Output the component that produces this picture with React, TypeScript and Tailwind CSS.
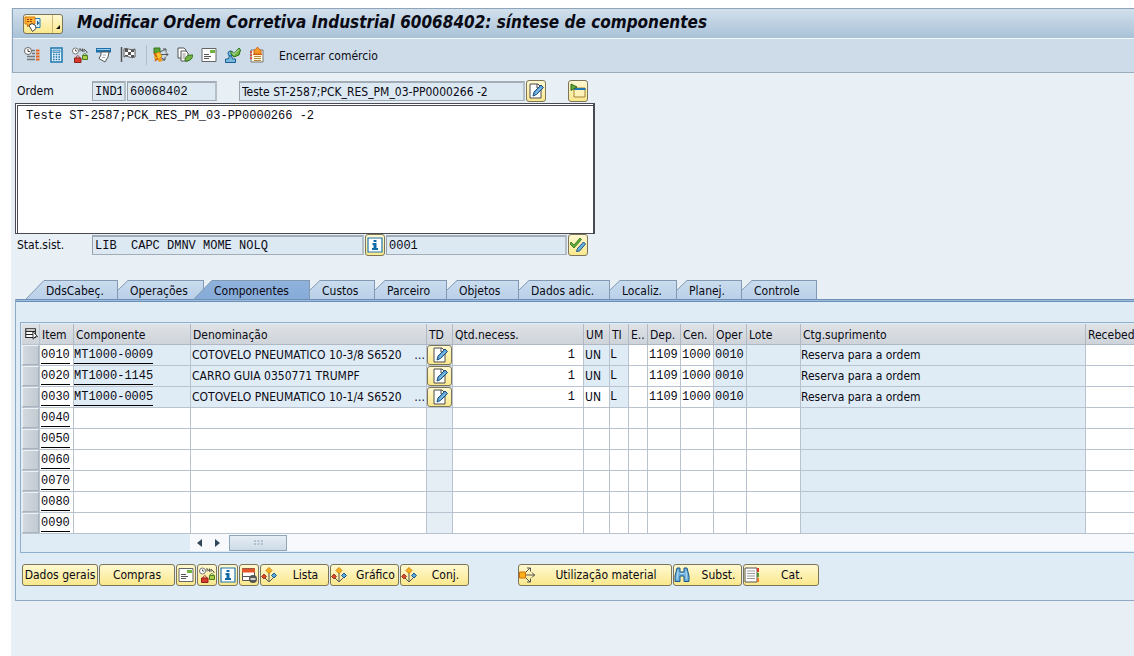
import React from "react";

const svgProps = {
  width: 16,
  height: 16,
  viewBox: "0 0 16 16",
  fill: "none",
  "aria-hidden": true,
} as const;

const MessageIcon = () => (
  <svg width="18" height="16" viewBox="0 0 18 16" fill="none" aria-hidden>
    <path d="M10 2.500h6v9h-6z" fill="#dff0fb" stroke="#1f7fb5" />
    <path d="M13 4.500l2.500 2.500L13 9.500z" fill="#1b5f8f" />
    <path d="M1 1h10v7H6l-2.500 3V8H1z" fill="#fbb034" stroke="#d97b0c" />
    <path d="M3 3.500h6M3 5.500h6" stroke="#a33c00" strokeDasharray="2 1" />
    <path d="M5 9.500l3-2 3.500 2 .5 3-3.500 3z" fill="#fff" stroke="#444" />
  </svg>
);

const ScheduleIcon = () => (
  <svg {...svgProps}>
    <circle cx="4" cy="4" r="3.500" fill="#fff" stroke="#666" />
    <path d="M4 2v2.500h2" stroke="#444" />
    <path d="M8 3.500h3M8 6.500h3M3 9.500h8M3 12.500h8" stroke="#777" strokeWidth="1.500" />
    <path d="M12 3.500h3.500M12 6.500h3.500M12 9.500h3.500M12 12.500h3.500" stroke="#e8651a" strokeWidth="2" />
  </svg>
);

const CalculatorIcon = () => (
  <svg {...svgProps}>
    <path d="M3 1h11v14H3z" fill="#e6f3fb" stroke="#1c75ad" strokeWidth="1.500" />
    <path d="M5 3h7v2.500H5z" fill="#9fc9e6" stroke="#1c75ad" strokeWidth=".7" />
    <path d="M5 7.500h7M5 10h7M5 12.500h7" stroke="#1c75ad" strokeWidth="1.500" strokeDasharray="1.600 1.100" />
  </svg>
);

const NetworkIcon = () => (
  <svg {...svgProps}>
    <circle cx="3.500" cy="4" r="3" fill="#fff" stroke="#777" />
    <path d="M3.500 2.500V4H5" stroke="#555" />
    <path d="M8 4.500V1.500L10.500 4.500V1.500M12 5V2l3 3V6" stroke="#555" />
    <path d="M4 11c0-3 3.500-3 3.500 0" stroke="#a33" />
    <path d="M2.500 11h6.500v4.500H2.500z" fill="#d8392b" stroke="#8d2119" />
    <path d="M11 8.500c0-2.500 3.500-2.500 3.500 0" stroke="#4c7d22" />
    <path d="M10.500 8.500h5v4h-5z" fill="#a8cf45" stroke="#4c7d22" />
  </svg>
);

const PrintIcon = () => (
  <svg {...svgProps}>
    <path d="M0 1h15v4.500H0z" fill="#1b6ea8" />
    <path d="M1 2.500h13" stroke="#9ccdea" />
    <path d="M5 5h8l-1 5-3 5-6-3.500L5 8z" fill="#fff" stroke="#555" />
    <path d="M7 8h3M6 10.500h3" stroke="#9ab" />
  </svg>
);

const FlagIcon = () => (
  <svg {...svgProps}>
    <path d="M1.500 0v15" stroke="#555" strokeWidth="1.500" />
    <path d="M4 2c3-2 5 2 11 0v8c-5 2-7-2-11 0z" fill="#fff" stroke="#555" />
    <path d="M5 2h3v3H5zM11 3h3v2h-3zM8 5h3v3H8zM5 8h3v1H5zM11 8h3v2h-3z" fill="#555" />
  </svg>
);

const DistributeIcon = () => (
  <svg {...svgProps}>
    <path d="M1 1h6v5H1z" fill="#59a63b" stroke="#36751d" />
    <path d="M7 5l6-3M8 7.500h7M7 10l5 3M10 2h3v3M13 5.500l2 2-2 2M12 10v3H9" stroke="#555" />
    <path d="M2 7l4-2 3 4-3 4-4-1z" fill="#ffc52e" stroke="#d88b0a" />
    <path d="M1 6l3 4M2 14l3-3" stroke="#c95b0a" strokeWidth="1.500" />
    <circle cx="7" cy="13" r="2" fill="#f19a18" />
  </svg>
);

const CopyDocIcon = () => (
  <svg {...svgProps}>
    <path d="M1 1h6l2 2v8H1z" fill="#fff" stroke="#555" />
    <path d="M4 4h5l2 2v8H4z" fill="#fff" stroke="#555" />
    <path d="M5.500 7h3M5.500 9h3M5.500 11h3" stroke="#888" />
    <path d="M8 14c0-6 4-6 8-6-1 5-4 6-8 6z" fill="#72b244" stroke="#35731f" />
  </svg>
);

const LetterIcon = () => (
  <svg {...svgProps}>
    <path d="M1 1.500h14v13H1z" fill="#fff" stroke="#666" />
    <path d="M9 3h5v3H9z" fill="#6fb33f" />
    <path d="M3 7.500h5M3 9.500h7M3 11.500h5" stroke="#555" />
  </svg>
);

const StampIcon = () => (
  <svg {...svgProps}>
    <path d="M.5 15.500h10V12H7.500l-1-3.500h-2l-1 3.500h-3z" fill="#79b8df" stroke="#175f93" />
    <circle cx="5.500" cy="6.500" r="2.500" fill="#79b8df" stroke="#175f93" />
    <path d="M6 4l3 2.500L14 1l1.500 2-1.500 5-5 2-3-3z" fill="#6bb33e" stroke="#2f7421" />
    <path d="M7 5.500l2 2L14 2.500" stroke="#d8f0c4" />
  </svg>
);

const AlertDocIcon = () => (
  <svg {...svgProps}>
    <path d="M2 3h12v12H2z" fill="#fff8df" stroke="#777" />
    <path d="M1 5h2M1 8h2M1 11h2" stroke="#d8392b" strokeWidth="1.500" />
    <path d="M5 9.500h7M5 11.500h7M5 13.500h7" stroke="#b28a3a" />
    <path d="M8.500 0l1 1.500 2.500 2V7H5V3.500l2.500-2z" fill="#f69b24" stroke="#d35f12" />
    <path d="M4 7.500h9" stroke="#d35f12" />
  </svg>
);

const EditIcon = () => (
  <svg {...svgProps}>
    <path d="M2 1h8l3 3v11H2z" fill="#fff" stroke="#4c4c4c" />
    <path d="M9 1v4h4" stroke="#4c4c4c" />
    <path d="M5 13l1-4 7-7 2.500 2.500-7 7z" fill="#5ea5d6" stroke="#174f7c" />
    <path d="M7.500 10.500l5.500-5.500" stroke="#8fc4e6" />
  </svg>
);

const PanelIcon = () => (
  <svg {...svgProps}>
    <path d="M4 5h11v9H4z" fill="#fdf3b8" stroke="#a3843a" />
    <path d="M4 6h11.500" stroke="#1f78b4" strokeWidth="2" />
    <path d="M1 1l6 3-6 3.500z" fill="#62a83a" stroke="#2e6d1b" />
  </svg>
);

const InfoIcon = () => (
  <svg {...svgProps}>
    <path d="M1 1h14v14H1z" fill="#fff" stroke="#1c75ad" strokeWidth="1.200" />
    <path d="M6.500 3h3v2h-3zM5.500 6h4v5h1.500v2H5v-2h1.500V8h-1z" fill="#0f6ba6" />
  </svg>
);

const CheckEditIcon = () => (
  <svg {...svgProps}>
    <path d="M1 5l3 3 6-7 1.500 1.500L4 11 0 7z" fill="#5fae35" stroke="#2b6d1d" strokeWidth=".8" />
    <path d="M6.500 14.500l1-3 6-6.500 2 2-6 7z" fill="#6cb2de" stroke="#1b5480" />
  </svg>
);

const TableConfigIcon = () => (
  <svg {...svgProps} width="14" height="14">
    <path d="M2 2h11v10H2zM2 5h11M2 8.500h11" fill="#fff" stroke="#222" strokeWidth="1.200" />
    <path d="M10 5l5.500 6-3 .3L10.500 14z" fill="#fff" stroke="#222" />
  </svg>
);

const DeleteRowIcon = () => (
  <svg {...svgProps}>
    <path d="M1.500 1.500h12v12h-12z" fill="#fff" stroke="#555" />
    <path d="M1 1.500h13v4H1z" fill="#e3562a" />
    <path d="M1.500 9.500h12" stroke="#555" />
    <circle cx="12" cy="12" r="4" fill="#555" />
    <path d="M9.500 12h5" stroke="#fff" strokeWidth="1.500" />
  </svg>
);

const HierarchyIcon = () => (
  <svg {...svgProps}>
    <path d="M8 6v9M3 10l5 5 5-5" stroke="#555" />
    <path d="M8 .5l3 3-3 3-3-3z" fill="#f9b21c" stroke="#cb7c0a" />
    <path d="M3 7l2.500 2.500L3 12 .5 9.500z" fill="#d9482b" stroke="#8d2a19" strokeWidth=".8" />
    <path d="M13 6l2.500 2.500L13 11l-2.500-2.500z" fill="#5aa6d8" stroke="#1b5c8c" />
  </svg>
);

const UsageIcon = () => (
  <svg {...svgProps}>
    <path d="M.5 5h6v6h-6z" fill="#fbb117" stroke="#cf6e0b" />
    <path d="M7 5l4-4M7 8h9M7 11l4 4M8 1h3.500v3.500M13 5.500l2.500 2.500-2.500 2.500M8 15h3.500v-3.500" stroke="#555" />
  </svg>
);

const BinocularsIcon = () => (
  <svg {...svgProps}>
    <path d="M3 1h3v4h4V1h3l2 8v5.500h-5V9H6v5.500H1V9z" fill="#6fb1dc" stroke="#1a5785" />
    <path d="M6 6.500h4M4 4L3 12M12 4l.5 8" stroke="#b6dcf3" />
  </svg>
);

const CatalogIcon = () => (
  <svg {...svgProps}>
    <path d="M1 1h12v14H1z" fill="#fff" stroke="#555" />
    <path d="M3 4h8M3 6.500h8M3 9h8M3 11.500h8" stroke="#999" />
    <path d="M13 1h2v4h-2z" fill="#d8392b" />
    <path d="M13 6h2v4h-2z" fill="#4f9a34" />
    <path d="M13 11h2v4h-2z" fill="#e5762a" />
  </svg>
);

const gold =
  "flex shrink-0 items-center rounded-[3px] border border-[#7d7558] bg-linear-to-b from-[#fff8d0] to-[#fae88c]";
const field =
  "h-5 min-w-0 border border-t-2 border-t-[#a3adb7] border-l-[#97a2ac] border-r-[#b4bfc8] border-b-[#a3adb7] border-r-2 bg-[#dce8f2] px-0.5 outline-none";
const mono = "font-['Liberation_Mono',monospace]";

function IconButton({ label, children }: { label: string; children: React.ReactNode }) {
  return (
    <button aria-label={label} className={`${gold} h-[22px] w-5 justify-center overflow-hidden`}>
      {children}
    </button>
  );
}

const tools: [string, () => React.JSX.Element][] = [
  ["Programação", ScheduleIcon],
  ["Calcular custos", CalculatorIcon],
  ["Rede", NetworkIcon],
  ["Imprimir", PrintIcon],
  ["Encerrar", FlagIcon],
];
const tools2: [string, () => React.JSX.Element][] = [
  ["Distribuir", DistributeIcon],
  ["Copiar", CopyDocIcon],
  ["Texto", LetterIcon],
  ["Aprovar", StampIcon],
  ["Aviso", AlertDocIcon],
];

const tabs: { label: string; width: string }[] = [
  { label: "DdsCabeç.", width: "w-[92px]" },
  { label: "Operações", width: "w-[86px]" },
  { label: "Componentes", width: "w-[116px]" },
  { label: "Custos", width: "w-[65px]" },
  { label: "Parceiro", width: "w-[72px]" },
  { label: "Objetos", width: "w-[72px]" },
  { label: "Dados adic.", width: "w-[91px]" },
  { label: "Localiz.", width: "w-[67px]" },
  { label: "Planej.", width: "w-[65px]" },
  { label: "Controle", width: "w-[75px]" },
];

function Tab({ label, width, index }: { label: string; width: string; index: number }) {
  const active = label === "Componentes";
  const wide = active || index === 0;
  const top = active ? "#8fb2dc" : "#cadcee";
  const bottom = active ? "#86abd8" : "#b9d0e8";
  return (
    <button
      role="tab"
      aria-selected={active}
      className={`relative flex h-[19px] shrink-0 ${width} ${active ? "z-10 -ml-2.5" : ""}`}
    >
      <svg
        width={wide ? 18 : 10}
        height="19"
        viewBox={wide ? "0 0 18 19" : "0 0 10 19"}
        className="shrink-0"
        aria-hidden
      >
        <defs>
          <linearGradient id={`slope${index}`} x1="0" y1="0" x2="0" y2="1">
            <stop offset="0" stopColor={top} />
            <stop offset="1" stopColor={bottom} />
          </linearGradient>
        </defs>
        <path d={wide ? "M0 19L18 0V19z" : "M0 19V10L10 0V19z"} fill={`url(#slope${index})`} />
        <path d={wide ? "M0 19L18 .5" : "M0 10L10 .5"} stroke="#8299b3" fill="none" />
      </svg>
      <span
        className={`flex h-full flex-1 items-center border-t border-r border-[#8299b3] bg-linear-to-b pt-px pl-0.5 whitespace-nowrap ${
          active ? "from-[#8fb2dc] to-[#86abd8]" : "from-[#cadcee] to-[#b9d0e8]"
        }`}
      >
        {label}
      </span>
    </button>
  );
}

const columns: { label: string; width: string }[] = [
  { label: "Item", width: "w-[34px]" },
  { label: "Componente", width: "w-[117px]" },
  { label: "Denominação", width: "w-[236px]" },
  { label: "TD", width: "w-[26px]" },
  { label: "Qtd.necess.", width: "w-[131px]" },
  { label: "UM", width: "w-[26px]" },
  { label: "TI", width: "w-[19px]" },
  { label: "E..", width: "w-[19px]" },
  { label: "Dep.", width: "w-[33px]" },
  { label: "Cen.", width: "w-[33px]" },
  { label: "Oper", width: "w-[33px]" },
  { label: "Lote", width: "w-[54px]" },
  { label: "Ctg.suprimento", width: "w-[285px]" },
  { label: "Recebed", width: "w-auto" },
];

const filled: Record<string, { code: string; name: string; cut?: boolean }> = {
  "0010": { code: "MT1000-0009", name: "COTOVELO PNEUMATICO 10-3/8 S6520", cut: true },
  "0020": { code: "MT1000-1145", name: "CARRO GUIA 0350771 TRUMPF" },
  "0030": { code: "MT1000-0005", name: "COTOVELO PNEUMATICO 10-1/4 S6520", cut: true },
};
const items = ["0010", "0020", "0030", "0040", "0050", "0060", "0070", "0080", "0090"];

const cell = "h-[21px] overflow-hidden border-r border-b border-[#b9c3cf] p-0 whitespace-nowrap last:border-r-0";
const blue = "bg-[#dfebf5]";
const white = "bg-white";
const link = "inline-block h-[17px] border-b border-black leading-4";

function CellInput({ label, value = "", right }: { label: string; value?: string; right?: boolean }) {
  return (
    <input
      aria-label={label}
      defaultValue={value}
      className={`block h-5 w-full bg-transparent ${mono} outline-none ${right ? "pr-2 text-right" : ""}`}
    />
  );
}

function Row({ item }: { item: string }) {
  const data = filled[item];
  const fixed = data ? blue : white;
  return (
    <tr>
      <td className={cell}>
        <button
          aria-label={`Selecionar ${item}`}
          className="block h-5 w-full border border-t-[#eef1f4] border-l-[#eef1f4] border-r-[#a9b3bd] border-b-[#a9b3bd] bg-linear-to-r from-[#d3d9df] to-[#c2cad2]"
        />
      </td>
      <td className={`${cell} ${white} pl-px ${mono}`}>
        <a href="#item" className={link}>{item}</a>
      </td>
      <td className={`${cell} ${fixed} ${mono}`}>
        {data ? <a href="#material" className={link}>{data.code}</a> : <CellInput label={`Componente ${item}`} />}
      </td>
      <td className={`${cell} ${fixed}`}>
        {data ? (
          <div className="flex justify-between px-px">
            <span>{data.name}</span>
            {data.cut && <span>…</span>}
          </div>
        ) : (
          <CellInput label={`Denominação ${item}`} />
        )}
      </td>
      <td className={`${cell} bg-[#e6eef5]`}>
        {data && (
          <button aria-label={`Texto descritivo ${item}`} className={`${gold} h-5 w-full justify-center`}>
            <EditIcon />
          </button>
        )}
      </td>
      <td className={`${cell} ${white}`}>
        <CellInput label={`Quantidade ${item}`} value={data ? "1" : ""} right />
      </td>
      <td className={`${cell} ${item === "0030" ? white : fixed} pl-px`}>{data && "UN"}</td>
      <td className={`${cell} ${fixed} ${mono}`}>{data && "L"}</td>
      <td className={`${cell} ${white}`}><CellInput label={`E ${item}`} /></td>
      <td className={`${cell} ${white} pl-px`}><CellInput label={`Depósito ${item}`} value={data && "1109"} /></td>
      <td className={`${cell} ${white} pl-px`}><CellInput label={`Centro ${item}`} value={data && "1000"} /></td>
      <td className={`${cell} ${fixed} pl-px ${mono}`}>{data && "0010"}</td>
      <td className={`${cell} ${fixed}`}></td>
      <td className={`${cell} ${blue}`}>{data && "Reserva para a ordem"}</td>
      <td className={`${cell} ${white}`}><CellInput label={`Recebedor ${item}`} /></td>
    </tr>
  );
}

function ActionButton({ width, label, icon }: { width: string; label: string; icon?: React.ReactNode }) {
  return (
    <button className={`${gold} h-[22px] ${width} overflow-hidden whitespace-nowrap`}>
      {icon}
      <span className={`flex-1 text-center ${icon ? "pl-1.5" : ""}`}>{label}</span>
    </button>
  );
}

export default function App() {
  return (
    <div className="min-h-screen overflow-hidden bg-white pt-2 pl-[11px] font-['DejaVu_Sans_Condensed','DejaVu_Sans',sans-serif] text-xs text-[#0a0a14]">
      <div className="min-h-[648px] bg-[#e8eff5] pl-px">
        <header className="border-t border-l border-[#8ea5b9]">
          <div className="flex h-[30px] items-center border-b border-[#f2f7fb] bg-linear-to-b from-[#d2e0ec] to-[#a9c2d8] pl-2.5">
            <button aria-label="Menu do sistema" className={`${gold} h-5 w-10`}>
              <span className="flex w-7 justify-start"><MessageIcon /></span>
              <span className="flex h-full flex-1 items-end justify-center border-l border-[#c9b878] pb-1">
                <svg width="4" height="4" viewBox="0 0 4 4" aria-hidden><path d="M4 0v4H0z" fill="#111" /></svg>
              </span>
            </button>
            <h1 className="ml-3.5 pb-1 text-[17px] leading-5 font-bold whitespace-nowrap italic">
              Modificar Ordem Corretiva Industrial 60068402: síntese de componentes
            </h1>
          </div>
          <div className="flex h-[34px] items-center border-b border-[#9aabbc] bg-[#cddce8] pb-0.5 pl-[11px]">
            <div className="flex gap-2">
              {tools.map(([label, Icon]) => (
                <button key={label} aria-label={label}><Icon /></button>
              ))}
            </div>
            <div className="ml-2.5 h-5 w-px bg-[#aebfce]" />
            <div className="ml-1.5 flex gap-2">
              {tools2.map(([label, Icon]) => (
                <button key={label} aria-label={label}><Icon /></button>
              ))}
            </div>
            <button className="ml-3.5 pt-0.5">Encerrar comércio</button>
          </div>
        </header>

        <main className="pl-[3px]">
          <div className="mt-[7px] flex h-[22px] items-center pl-0.5">
            <label htmlFor="order" className="w-[75px]">Ordem</label>
            <input readOnly aria-label="Tipo de ordem" defaultValue="IND1" className={`${field} ${mono} w-[34px]`} />
            <input readOnly id="order" defaultValue="60068402" className={`${field} ${mono} ml-px w-[90px]`} />
            <input readOnly aria-label="Descrição" defaultValue="Teste ST-2587;PCK_RES_PM_03-PP0000266 -2" className={`${field} ml-[22px] w-[286px]`} />
            <div className="ml-px flex gap-[22px]">
              <IconButton label="Editar texto"><EditIcon /></IconButton>
              <IconButton label="Abrir detalhes"><PanelIcon /></IconButton>
            </div>
          </div>

          <div className="mt-px w-[580px] border border-r-2 border-[#4a4a55] bg-white pt-px pl-px">
            <textarea
              aria-label="Texto descritivo"
              defaultValue="Teste ST-2587;PCK_RES_PM_03-PP0000266 -2"
              className={`block h-[128px] w-full resize-none border-t border-l border-[#4a4a55] pt-0.5 pl-2 leading-4 ${mono} outline-none`}
            />
          </div>

          <div className="flex h-[22px] items-center pl-0.5">
            <label htmlFor="status" className="w-[75px]">Stat.sist.</label>
            <input readOnly id="status" defaultValue="LIB  CAPC DMNV MOME NOLQ" className={`${field} ${mono} w-[272px]`} />
            <div className="mx-px flex"><IconButton label="Informação de status"><InfoIcon /></IconButton></div>
            <input readOnly aria-label="Status do usuário" defaultValue="0001" className={`${field} ${mono} w-[181px]`} />
            <div className="ml-px flex"><IconButton label="Definir status"><CheckEditIcon /></IconButton></div>
          </div>

          <div role="tablist" className="mt-6 flex pl-[11px]">
            {tabs.map((t, i) => <Tab key={t.label} {...t} index={i} />)}
          </div>

          <section className="border-b border-l border-[#8fa9c4] bg-[#dfebf5] pb-[14px]">
            <div className="h-[3px] border-t border-b border-t-[#6c8fb5] border-b-[#6c8fb5] bg-[#9dbce0]" />
            <div className="mt-5 ml-1 border border-r-0 border-[#8fb0cd] pt-px pl-px">
              <table className="w-full table-fixed border-separate border-spacing-0">
                <thead>
                  <tr className="bg-linear-to-b from-[#dfe2e5] to-[#cdd3d9] text-left">
                    <th className="h-[21px] w-[18px] border-r border-b border-[#b9c3cf] p-0">
                      <button aria-label="Configurar tabela" className="flex w-full justify-center"><TableConfigIcon /></button>
                    </th>
                    {columns.map((c) => (
                      <th key={c.label} className={`h-[21px] overflow-hidden border-r border-b border-[#b0b9c3] p-0 pt-0.5 pl-0.5 font-normal whitespace-nowrap last:border-r-0 ${c.width}`}>
                        {c.label}
                      </th>
                    ))}
                  </tr>
                </thead>
                <tbody>
                  {items.map((i) => <Row key={i} item={i} />)}
                </tbody>
              </table>
              <div className="flex h-[18px] items-start pl-[168px]">
                <div className="flex h-[17px] flex-1 items-center bg-[#f7f9fc]">
                  <button aria-label="Rolar à esquerda" className="flex h-4 w-[18px] items-center justify-center">
                    <svg width="5" height="8" viewBox="0 0 5 8" aria-hidden><path d="M5 0v8L0 4z" fill="#33475b" /></svg>
                  </button>
                  <button aria-label="Rolar à direita" className="flex h-4 w-[18px] items-center justify-center">
                    <svg width="5" height="8" viewBox="0 0 5 8" aria-hidden><path d="M0 0v8l5-4z" fill="#33475b" /></svg>
                  </button>
                  <div className="ml-[3px] flex h-4 w-[58px] items-center justify-center border border-[#8fa5ba] bg-linear-to-b from-[#e6eef5] to-[#cddae6]">
                    <svg width="9" height="6" viewBox="0 0 9 6" aria-hidden>
                      <path d="M0 1h9M0 4h9" stroke="#8a9cb0" strokeDasharray="2 1.500" />
                    </svg>
                  </div>
                </div>
              </div>
            </div>

            <div className="mt-[11px] flex gap-px pl-1.5">
              <ActionButton width="w-[76px]" label="Dados gerais" />
              <ActionButton width="w-[76px]" label="Compras" />
              <IconButton label="Texto"><LetterIcon /></IconButton>
              <IconButton label="Rede"><NetworkIcon /></IconButton>
              <IconButton label="Informação"><InfoIcon /></IconButton>
              <IconButton label="Eliminar linha"><DeleteRowIcon /></IconButton>
              <ActionButton width="w-[69px]" label="Lista" icon={<HierarchyIcon />} />
              <ActionButton width="w-[69px]" label="Gráfico" icon={<HierarchyIcon />} />
              <ActionButton width="w-[69px]" label="Conj." icon={<HierarchyIcon />} />
              <div className="ml-12 flex gap-px">
                <ActionButton width="w-[154px]" label="Utilização material" icon={<UsageIcon />} />
                <ActionButton width="w-[69px]" label="Subst." icon={<BinocularsIcon />} />
                <ActionButton width="w-[76px]" label="Cat." icon={<CatalogIcon />} />
              </div>
            </div>
          </section>
        </main>
      </div>
    </div>
  );
}
